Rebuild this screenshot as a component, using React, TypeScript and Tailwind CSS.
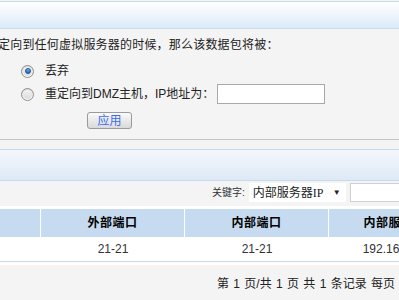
import React from "react";

const font = { fontFamily: '"Liberation Sans", "Noto Sans CJK SC", sans-serif' };

function Radio({ checked }: { checked?: boolean }) {
  return (
    <span className="relative inline-flex h-[13px] w-[13px] items-center justify-center rounded-full border border-[#8f8f8f] bg-gradient-to-b from-[#d9d9d9] to-[#fbfbfb]">
      <span className="h-[9px] w-[9px] rounded-full bg-gradient-to-b from-[#f2f2f2] to-[#dcdcdc] flex items-center justify-center">
        {checked && (
          <span className="h-[6px] w-[6px] rounded-full border border-[#1d4f8a] bg-gradient-to-b from-[#5fb3ec] to-[#1f6cc0]" />
        )}
      </span>
    </span>
  );
}

export default function App() {
  return (
    <div
      className="relative h-[300px] w-[399px] overflow-hidden bg-[#f4f4f4] text-[12px] text-[#222]"
      style={font}
    >
      {/* top panel header */}
      <div className="mt-[1px] h-[28px] border-t border-b border-[#c8dcef] bg-gradient-to-b from-white to-[#dceaf8]" />

      {/* description */}
      <div className="ml-[-2px] mt-[8px] h-[16px] leading-[16px] whitespace-nowrap tracking-[0.2px]">
        定向到任何虚拟服务器的时候，那么该数据包将被：
      </div>

      <div className="mt-[9px] flex h-[18px] items-center">
        <div className="ml-[21px] flex items-center">
          <Radio checked />
        </div>
        <span className="ml-[11px] leading-[16px]">丢弃</span>
      </div>

      <div className="mt-[4px] flex h-[20px] items-center">
        <div className="ml-[21px] flex items-center">
          <Radio />
        </div>
        <span className="ml-[11px] whitespace-nowrap leading-[16px]">重定向到DMZ主机，IP地址为：</span>
        <div className="ml-[3px] h-[20px] w-[108px] shrink-0 border border-[#a9a9a9] bg-white" />
      </div>

      <div className="mt-[8px] flex">
        <button className="ml-[87px] flex h-[17px] w-[45px] items-center justify-center rounded-[3px] border border-[#9a9a9a] bg-gradient-to-b from-[#fafafa] to-[#d9d9d9] text-[12px] leading-[12px] text-[#3b6cf0]">
          应用
        </button>
      </div>

      <div className="mt-[10px] h-px bg-[#c4c4c4]" />

      {/* second panel header */}
      <div className="mt-[9px] h-[32px] border-t border-b border-[#c6daee] bg-gradient-to-b from-[#f4f8fc] to-[#dde9f6]" />

      {/* keyword row */}
      <div className="mt-[2px] flex h-[19px] items-center">
        <span className="ml-[212px] text-[10px] leading-[10px] text-[#333] whitespace-nowrap">关键字:</span>
        <div
          className="ml-[4px] flex h-[19px] w-[97px] shrink-0 items-center justify-between bg-white pl-[4px] pr-[5px]"
          style={{ fontFamily: '"Liberation Serif", "Noto Sans CJK SC", serif' }}
        >
          <span className="whitespace-nowrap text-[12px]">内部服务器IP</span>
          <span className="text-[8px] leading-[8px]">▼</span>
        </div>
        <div className="ml-[4px] h-[19px] w-[60px] shrink-0 border border-[#d0d0d0] bg-white" />
      </div>

      {/* table */}
      <div className="mt-[4px] bg-white pt-[3px] pb-[3px]">
        <div className="flex h-[28px] bg-[#c6dbef] font-bold text-black">
          <div className="w-[41px] shrink-0 border-r border-white" />
          <div className="flex w-[144px] shrink-0 items-center justify-center border-r border-white tracking-[0.5px]">外部端口</div>
          <div className="flex w-[144px] shrink-0 items-center justify-center border-r border-white tracking-[0.5px]">内部端口</div>
          <div className="flex w-[144px] shrink-0 items-center justify-center tracking-[0.5px] whitespace-nowrap">内部服务器IP</div>
        </div>
        <div className="flex h-[25px] border-b border-[#c6dbef] text-[#333]">
          <div className="w-[41px] shrink-0" />
          <div className="flex w-[144px] shrink-0 items-center justify-center">21-21</div>
          <div className="flex w-[144px] shrink-0 items-center justify-center">21-21</div>
          <div className="flex w-[144px] shrink-0 items-center justify-center whitespace-nowrap">192.168.1.100</div>
        </div>
      </div>

      {/* pagination */}
      <div className="mt-[11px] ml-[217px] whitespace-nowrap leading-[16px] text-[#222] [word-spacing:1px]">
        第 1 页/共 1 页 共 1 条记录 每页
      </div>
    </div>
  );
}
